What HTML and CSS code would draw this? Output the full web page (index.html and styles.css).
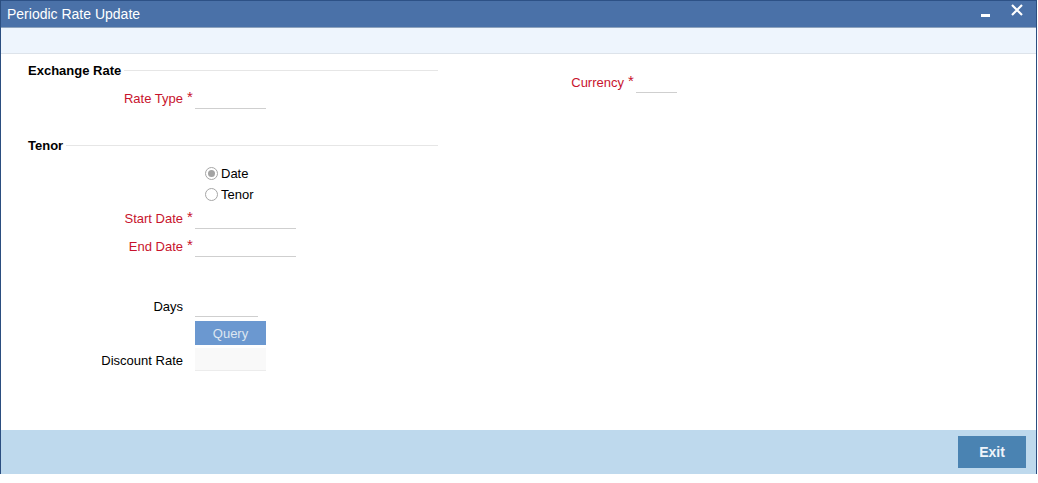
FILE: index.html
```html
<!DOCTYPE html>
<html>
<head>
<meta charset="utf-8">
<link rel="stylesheet" href="styles.css">
</head>
<body>
<div class="window">
  <div class="titlebar">
    <span class="title">Periodic Rate Update</span>
    <div class="controls">
      <span class="min"></span>
      <svg class="close" width="12" height="12" viewBox="0 0 12 12"><path d="M1 1 L11 11 M11 1 L1 11" stroke="#fff" stroke-width="2.2" fill="none"/></svg>
    </div>
  </div>
  <div class="toolband"></div>
  <div class="main">
    <div class="leftcol">
      <div class="section-head first"><span>Exchange Rate</span><span class="rule"></span></div>
      <div class="row r-ratetype">
        <span class="lbl req">Rate Type</span><span class="ast">*</span>
        <span class="field w71"></span>
      </div>
      <div class="section-head tenor"><span>Tenor</span><span class="rule"></span></div>
      <div class="radios">
        <div class="radio-row"><span class="radio checked"></span><span class="rlabel">Date</span></div>
        <div class="radio-row"><span class="radio"></span><span class="rlabel">Tenor</span></div>
      </div>
      <div class="row r-start">
        <span class="lbl req">Start Date</span><span class="ast">*</span>
        <span class="field w101"></span>
      </div>
      <div class="row r-end">
        <span class="lbl req">End Date</span><span class="ast">*</span>
        <span class="field w101"></span>
      </div>
      <div class="row r-days">
        <span class="lbl">Days</span><span class="ast"></span>
        <span class="field w63"></span>
      </div>
      <div class="row r-query">
        <span class="lbl"></span><span class="ast"></span>
        <button class="query">Query</button>
      </div>
      <div class="row r-disc">
        <span class="lbl">Discount Rate</span><span class="ast"></span>
        <span class="field disc"></span>
      </div>
    </div>
    <div class="rightcol">
      <div class="row r-currency">
        <span class="lbl req">Currency</span><span class="ast">*</span>
        <span class="field w41"></span>
      </div>
    </div>
  </div>
  <div class="footer">
    <button class="exit">Exit</button>
  </div>
</div>
</body>
</html>
```
FILE: styles.css
```css
* { box-sizing: border-box; }
html, body { margin: 0; padding: 0; background: #fff; }
body { font-family: "Liberation Sans", Arial, sans-serif; font-size: 13px; color: #000; }

.window {
  width: 1037px;
  height: 474px;
  border-left: 1px solid #2b4e80;
  border-right: 1px solid #2b4e80;
  display: flex;
  flex-direction: column;
  background: #fff;
}

.titlebar {
  height: 28px;
  background: #4a71a8;
  border-top: 1px solid #2d5186;
  border-bottom: 1px solid #8ea3bd;
  display: flex;
  align-items: center;
  justify-content: space-between;
  padding-left: 6px;
  padding-right: 13px;
}
.title { color: #fff; font-size: 14px; margin-top: -1px; }
.controls { display: flex; align-items: center; gap: 21px; }
.min { display: block; width: 9px; height: 3px; background: #fff; margin-top: 3px; }
.close { display: block; margin-top: -8px; }

.toolband {
  height: 26px;
  background: #eef5fd;
  border-bottom: 1px solid #dde3ea;
}

.main { flex: 1; display: flex; }
.leftcol { width: 437px; padding-left: 27px; display: flex; flex-direction: column; }
.rightcol { flex: 1; padding-left: 22px; }

.section-head {
  display: flex;
  align-items: center;
  height: 16px;
  font-weight: bold;
  font-size: 13px;
}
.section-head .rule { flex: 1; border-top: 1px solid #e6e6e6; margin-left: 3px; }
.section-head.first { margin-top: 8px; }
.section-head.tenor { margin-top: 28px; }

.row { display: flex; align-items: center; }
.lbl { width: 155px; text-align: right; color: #000; }
.lbl.req { color: #c8132d; }
.rightcol .lbl { width: 164px; }
.ast { width: 12px; color: #c8132d; padding-left: 4px; position: relative; top: -2px; font-size: 15px; }
.field { display: block; height: 22px; border-bottom: 1px solid #cfcfcf; }
.w71 { width: 71px; }
.w101 { width: 101px; }
.w63 { width: 63px; }
.w41 { width: 41px; }

.r-ratetype { margin-top: 9px; }
.radios { margin-top: 10px; padding-left: 177px; }
.radio-row { height: 21px; display: flex; align-items: center; }
.radio {
  width: 13px; height: 13px;
  border: 1px solid #a6a6a6;
  border-radius: 50%;
  background: #fff;
  display: flex; align-items: center; justify-content: center;
}
.radio.checked::after {
  content: "";
  width: 7px; height: 7px;
  border-radius: 50%;
  background: #a3a3a3;
}
.rlabel { margin-left: 3px; }
.r-start { margin-top: 2px; }
.r-end { margin-top: 6px; }
.r-days { margin-top: 38px; }
.r-query { margin-top: 4px; }
.query {
  width: 71px; height: 24px;
  background: #6b98d0;
  color: #dde6f1;
  border: none;
  font-family: "Liberation Sans", Arial, sans-serif;
  font-size: 13px;
  padding: 0;
}
.r-disc { margin-top: 3px; }
.r-disc .lbl { margin-top: 2px; }
.field.disc { width: 71px; height: 23px; background: #f9f9f9; border-bottom: 1px solid #ececec; }

.r-currency { margin-top: 17px; }

.footer {
  height: 44px;
  background: #bed9ed;
  display: flex;
  justify-content: flex-end;
  align-items: center;
  padding-right: 10px;
}
.exit {
  width: 68px; height: 32px;
  background: #4a83b2;
  color: #eef4fa;
  border: none;
  font-family: "Liberation Sans", Arial, sans-serif;
  font-weight: bold;
  font-size: 14px;
  padding: 0;
}
```
